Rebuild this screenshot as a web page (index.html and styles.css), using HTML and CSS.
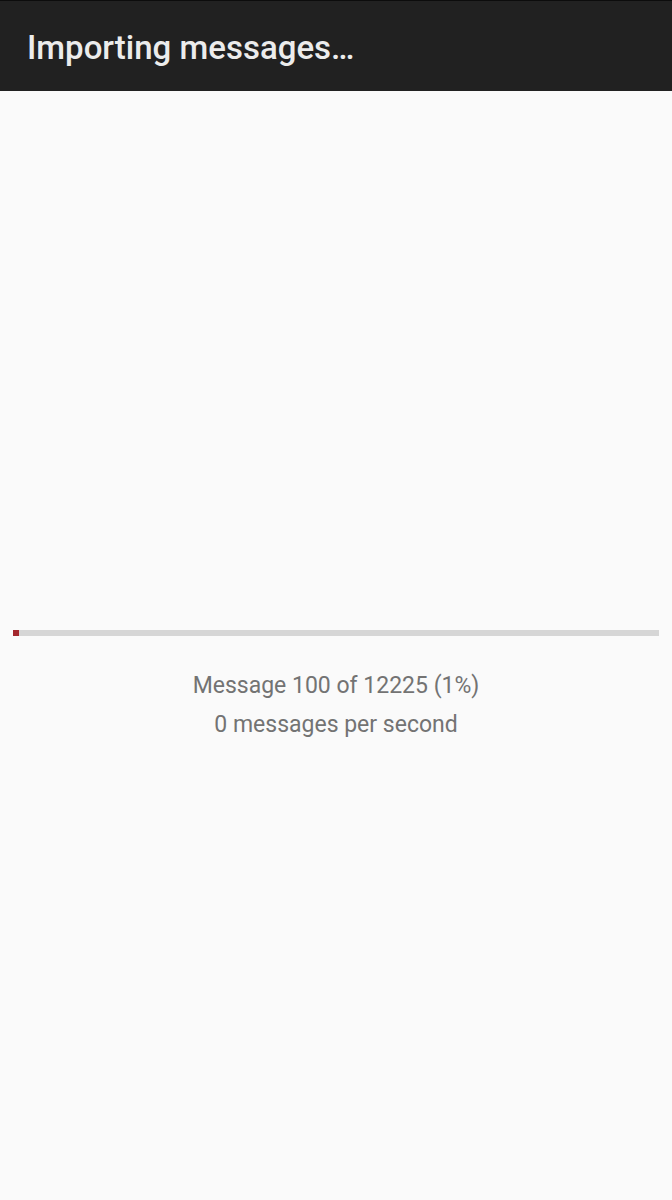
FILE: index.html
```html
<!DOCTYPE html>
<html lang="en">
<head>
    <meta charset="UTF-8">
    <meta name="viewport" content="width=device-width, initial-scale=1.0">
    <title>Importing messages</title>
    <link rel="stylesheet" href="styles.css">
</head>
<body>
    <div class="toolbar">
        <h1 class="title">Importing messages…</h1>
    </div>

    <div class="content">
        <div class="progress">
            <div class="progress-fill" style="width: 1%;"></div>
        </div>
        <div class="status">
            <div class="status-line">Message 100 of 12225 (1%)</div>
            <div class="status-line">0 messages per second</div>
        </div>
    </div>
</body>
</html>
```

FILE: styles.css
```css
body {
    margin: 0;
    font-family: Roboto, "Noto Sans", Arial, sans-serif;
    background: #fafafa;
    height: 1200px;
}
.toolbar {
    height: 91px;
    background: #212121;
    border-top: 1px solid #0c0c0c;
    box-sizing: border-box;
    display: flex;
    align-items: center;
    padding-left: 27px;
}
.title {
    margin: 0;
    font-size: 33px;
    font-weight: 500;
    color: #ececec;
    padding-top: 2px;
}
.content {
    padding: 539px 13px 0;
}
.progress {
    height: 6px;
    background: #d6d6d6;
}
.progress-fill {
    height: 100%;
    background: #a3272d;
}
.status {
    text-align: center;
    margin-top: 30px;
    color: #737373;
    font-size: 23px;
}
.status-line {
    line-height: 39px;
}
```
